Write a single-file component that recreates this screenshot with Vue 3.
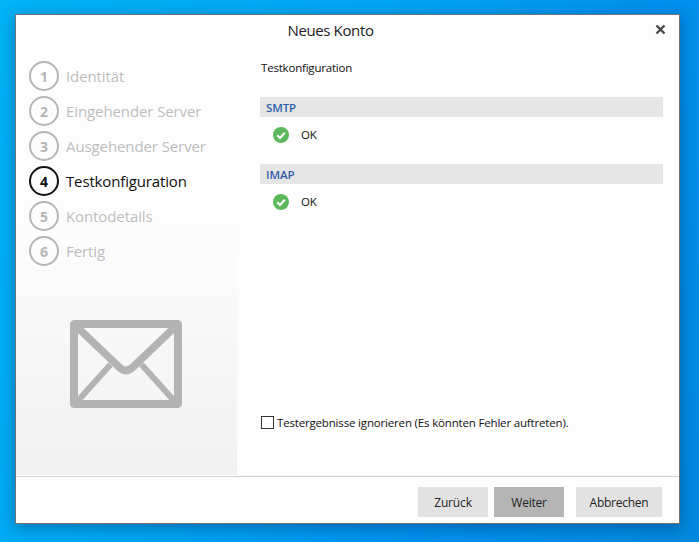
<script setup>
const steps = [
  { n: 1, label: 'Identität' },
  { n: 2, label: 'Eingehender Server' },
  { n: 3, label: 'Ausgehender Server' },
  { n: 4, label: 'Testkonfiguration', active: true },
  { n: 5, label: 'Kontodetails' },
  { n: 6, label: 'Fertig' },
]
const results = ['SMTP', 'IMAP']
</script>

<template>
  <div class="desktop">
    <div class="window">
      <header class="titlebar">
        <span class="title">Neues Konto</span>
        <svg class="close" width="11" height="11" viewBox="0 0 11 11">
          <path d="M1.5 1.5 9.5 9.5M9.5 1.5 1.5 9.5" stroke="#4a4a4a" stroke-width="2.4" fill="none" />
        </svg>
      </header>
      <div class="main">
        <aside class="side">
          <ul class="steps">
            <li v-for="s in steps" :key="s.n" class="step" :class="{ active: s.active }">
              <span class="num">{{ s.n }}</span>
              <span class="label">{{ s.label }}</span>
            </li>
          </ul>
          <svg class="mail" width="112" height="88" viewBox="0 0 112 88">
            <rect x="4" y="4" width="104" height="80" fill="none" stroke="#b3b3b3" stroke-width="8" rx="0.5" />
            <path d="M6 6 49 47Q56 54 63 47L106 6" fill="none" stroke="#b3b3b3" stroke-width="7.5" />
            <path d="M5 84 40.5 44.5M107 84 71.5 44.5" fill="none" stroke="#b3b3b3" stroke-width="6" />
          </svg>
        </aside>
        <section class="content">
          <h2 class="heading">Testkonfiguration</h2>
          <div v-for="r in results" :key="r" class="result">
            <div class="bar">{{ r }}</div>
            <div class="status">
              <svg width="16" height="16" viewBox="0 0 16 16">
                <circle cx="8" cy="8" r="8" fill="#5cb85c" />
                <path d="M4.2 8.2 7 11 11.8 5.8" fill="none" stroke="#fff" stroke-width="2.2" />
              </svg>
              <span>OK</span>
            </div>
          </div>
          <label class="ignore">
            <span class="box"></span>
            <span>Testergebnisse ignorieren (Es könnten Fehler auftreten).</span>
          </label>
        </section>
      </div>
      <footer class="footer">
        <button class="btn back">Zurück</button>
        <button class="btn next">Weiter</button>
        <button class="btn cancel">Abbrechen</button>
      </footer>
    </div>
  </div>
</template>

<style>
html, body { margin: 0; padding: 0; overflow: hidden; }
</style>

<style scoped>
.desktop {
  box-sizing: border-box;
  width: 699px;
  height: 542px;
  padding: 14px 19px 18px 15px;
  background:
    linear-gradient(115deg, #00b4f6 0%, #00a6f2 40%, #0090ee 70%, #0088dc 100%);
  font-family: "Open Sans", "Noto Sans", sans-serif;
}
.window {
  box-sizing: border-box;
  width: 665px;
  height: 510px;
  display: flex;
  flex-direction: column;
  background: #fdfdfd;
  border: 1px solid #6f7479;
  box-shadow: 0 3px 14px rgba(0, 40, 90, 0.45);
}
.titlebar {
  position: relative;
  height: 31px;
  flex: none;
  display: flex;
  justify-content: center;
  padding: 5px 34px 0 0;
  box-sizing: border-box;
}
.title {
  font-size: 15px;
  line-height: 20px;
  color: #222;
  letter-spacing: -0.37px;
}
.close { position: absolute; top: 9px; right: 13px; }
.main { flex: 1; display: flex; min-height: 0; padding-bottom: 1px; }
.side {
  width: 221px;
  flex: none;
  display: flex;
  flex-direction: column;
  background: linear-gradient(#fdfdfd 42%, #f1f1f1 100%);
}
.steps {
  list-style: none;
  margin: 0;
  padding: 15px 0 0 13px;
  display: flex;
  flex-direction: column;
  gap: 5px;
}
.step { display: flex; align-items: center; gap: 7px; height: 30px; color: #bdbdbd; }
.num {
  box-sizing: border-box;
  width: 30px;
  height: 30px;
  border: 2px solid #b5b5b5;
  border-radius: 50%;
  display: flex;
  align-items: center;
  justify-content: center;
  font-size: 14px;
  font-weight: 700;
  color: #b5b5b5;
}
.label { font-size: 15px; letter-spacing: -0.1px; }
.step.active .label { letter-spacing: -0.15px; }
.step.active { color: #111; }
.step.active .num { border-color: #111; color: #111; }
.mail { margin: 54px 0 0 54px; display: block; }
.content {
  flex: 1;
  padding: 14px 16px 0 23px;
  display: flex;
  flex-direction: column;
  font-size: 11.5px;
  color: #111;
}
.heading {
  margin: 0 0 22px 1px;
  font-size: 11.5px;
  line-height: 15px;
  font-weight: 400;
  letter-spacing: -0.2px;
}
.result { margin-bottom: 14px; }
.bar {
  height: 20px;
  line-height: 22px;
  background: #e5e5e5;
  padding-left: 6px;
  font-weight: 600;
  font-size: 11.5px;
  color: #2f5da8;
  letter-spacing: -0.1px;
}
.status {
  display: flex;
  align-items: center;
  gap: 12px;
  height: 33px;
  padding-left: 13px;
  padding-top: 2px;
  box-sizing: border-box;
  letter-spacing: -0.1px;
}
.ignore {
  margin-top: auto;
  margin-bottom: 45px;
  display: flex;
  align-items: center;
  gap: 3px;
  height: 15px;
  letter-spacing: -0.17px;
  margin-left: 1px;
}
.box {
  box-sizing: border-box;
  width: 13px;
  height: 13px;
  border: 1px solid #333;
  background: #fff;
}
.footer {
  flex: none;
  height: 47px;
  border-top: 1px solid #d0d0d0;
  box-sizing: border-box;
  display: flex;
  padding: 10px 17px 0 0;
  justify-content: flex-end;
  align-items: flex-start;
}
.btn {
  height: 30px;
  border: 0;
  padding: 0;
  background: #e2e2e2;
  font: inherit;
  font-size: 12px;
  letter-spacing: -0.15px;
  color: #222;
}
.back { width: 70px; margin-right: 6px; }
.next { width: 70px; margin-right: 12px; background: #b5b5b5; letter-spacing: -0.25px; }
.cancel { width: 86px; letter-spacing: -0.25px; }
</style>
